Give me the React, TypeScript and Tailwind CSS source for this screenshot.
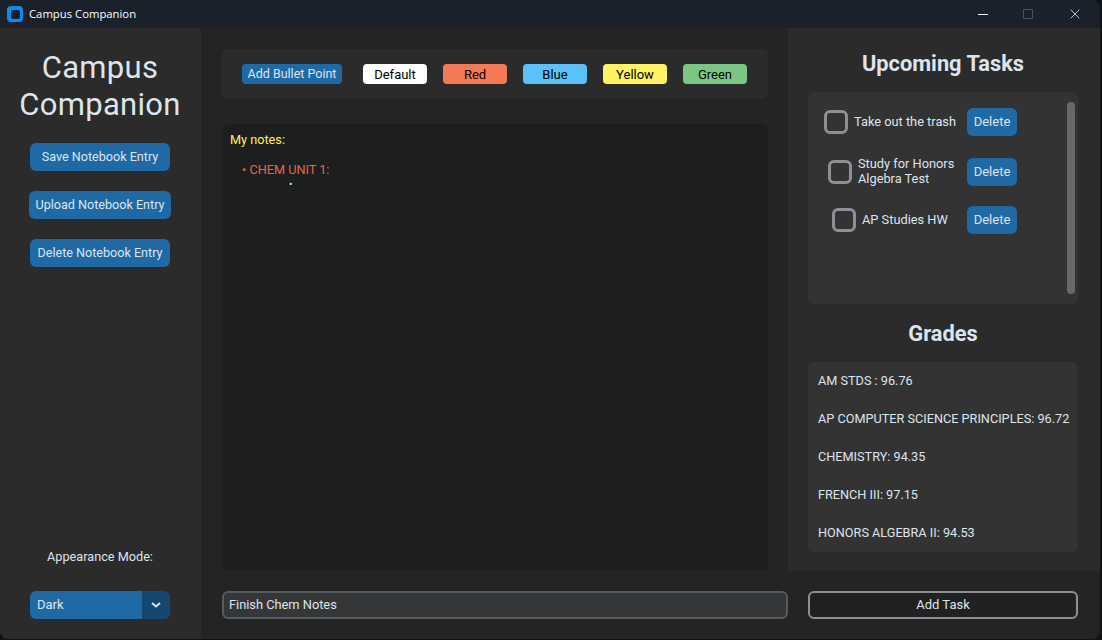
import React from 'react';
import { X } from 'lucide-react';

const colorButtons = [
    { label: 'Default', className: 'bg-white' },
    { label: 'Red', className: 'bg-[#f47a55]' },
    { label: 'Blue', className: 'bg-[#5ac2f8]' },
    { label: 'Yellow', className: 'bg-[#fff263]' },
    { label: 'Green', className: 'bg-[#7cc684]' },
];

const sideButtons = [
    { label: 'Save Notebook Entry', width: 'w-[140px]' },
    { label: 'Upload Notebook Entry', width: 'w-[142px]' },
    { label: 'Delete Notebook Entry', width: 'w-[140px]' },
];

const grades = [
    'AM STDS : 96.76',
    'AP COMPUTER SCIENCE PRINCIPLES: 96.72',
    'CHEMISTRY: 94.35',
    'FRENCH III: 97.15',
    'HONORS ALGEBRA II: 94.53',
];

const TaskRow = ({ lines, left, top }: { lines: string[]; left: string; top: string }) => (
    <div className={`flex items-center ${top} h-[28px]`}>
        <div className={`flex items-center flex-1 gap-[6px] ${left}`}>
            <div className="w-6 h-6 rounded-[6px] border-[3px] border-[#8d9196] shrink-0" />
            <div className="text-[12.8px] leading-[15px] text-[#dce4ee] whitespace-nowrap -mt-[2px]">
                {lines.map(line => <div key={line}>{line}</div>)}
            </div>
        </div>
        <button className="w-[50px] h-[28px] rounded-[6px] bg-[#1f6aa5] text-[13px] text-[#dce4ee] mr-[61px] shrink-0">Delete</button>
    </div>
);

const App: React.FC = () => {
    return (
        <div className="w-[1102px] h-[640px] overflow-hidden bg-[#0f1216] font-['Roboto',sans-serif]">
            <div className="w-[1100px] h-[639px] flex flex-col overflow-hidden rounded-tr-lg rounded-b-lg bg-[#242424]">
                {/* Title bar */}
                <div className="h-[28px] shrink-0 flex items-center bg-[#1a212a] pl-[7px]">
                    <div className="w-4 h-4 rounded-[4px] bg-[#0a8cf0] flex items-center justify-center">
                        <div className="w-[9px] h-[9px] rounded-[2px] bg-[#14202c]" />
                    </div>
                    <span className="ml-[6px] text-[11.3px] text-white font-['Open_Sans',sans-serif]">Campus Companion</span>
                    <div className="ml-auto flex items-center">
                        <div className="w-[10px] h-[1px] bg-white mr-[35px]" />
                        <div className="w-[10px] h-[10px] border border-[#4d535a] rounded-[1px] mr-[34px]" />
                        <X className="w-[16px] h-[16px] text-white mr-[17px]" strokeWidth={1.1} />
                    </div>
                </div>

                <div className="flex flex-1 min-h-0">
                    {/* Sidebar */}
                    <div className="w-[201px] shrink-0 bg-[#2b2b2b] flex flex-col items-center pr-px">
                        <h1 className="mt-[21px] text-[31px] leading-[37px] font-normal text-[#dce4ee] text-center tracking-[0.3px]">Campus<br />Companion</h1>
                        <div className="mt-[20px] flex flex-col items-center gap-[20px]">
                            {sideButtons.map(b => (
                                <button key={b.label} className={`${b.width} h-[28px] rounded-[6px] bg-[#1f6aa5] text-[12.6px] text-[#dce4ee] whitespace-nowrap`}>{b.label}</button>
                            ))}
                        </div>
                        <div className="mt-auto text-[12.7px] text-[#dce4ee] mb-[25px]">Appearance Mode:</div>
                        <div className="w-[140px] h-[28px] mb-[20px] rounded-[6px] overflow-hidden flex text-[13px] text-[#dce4ee]">
                            <div className="flex-1 bg-[#1f6aa5] pl-[7px] flex items-center">Dark</div>
                            <div className="w-[28px] bg-[#144870] flex items-center justify-center">
                                <svg width="10" height="6" viewBox="0 0 10 6" fill="none">
                                    <path d="M1 1 L5 4.5 L9 1" stroke="#dce4ee" strokeWidth="2" />
                                </svg>
                            </div>
                        </div>
                    </div>

                    {/* Main and right */}
                    <div className="flex-1 flex flex-col min-w-0">
                        <div className="h-[543px] flex shrink-0">
                            <div className="w-[587px] shrink-0 pl-[21px] pr-[20px] pt-[21px]">
                                <div className="h-[50px] rounded-[6px] bg-[#2b2b2b] flex items-center pl-[20px] gap-[16px]">
                                    <button className="w-[100px] h-[20px] pt-px rounded-[4px] bg-[#1f6aa5] text-[12.5px] text-[#dce4ee] mr-[5px] whitespace-nowrap">Add Bullet Point</button>
                                    {colorButtons.map(b => (
                                        <button key={b.label} className={`w-[64px] h-[20px] pt-px rounded-[4px] ${b.className} text-[13px] text-black`}>{b.label}</button>
                                    ))}
                                </div>
                                <div className="mt-[25px] h-[446px] rounded-[6px] bg-[#1d1e1e] pt-[8px] pl-[8px] text-[12.7px] leading-[15px]">
                                    <div className="text-[#fff263]">My notes:</div>
                                    <div className="mt-[15px] pl-[12px] text-[#e0694a]">• CHEM UNIT 1:</div>
                                    <div className="pl-[59px] text-[#dce4ee] text-[10px]">•</div>
                                </div>
                            </div>

                            <div className="flex-1 bg-[#2b2b2b] flex flex-col items-center pt-[22px] pr-[2px]">
                                <h2 className="text-[21.8px] leading-[28px] font-bold text-[#dce4ee]">Upcoming Tasks</h2>
                                <div className="relative mt-[14px] w-[270px] h-[212px] rounded-[6px] bg-[#333333] pt-[16px]">
                                    <TaskRow lines={['Take out the trash']} left="pl-[16px]" top="" />
                                    <TaskRow lines={['Study for Honors', 'Algebra Test']} left="pl-[20px]" top="mt-[22px]" />
                                    <TaskRow lines={['AP Studies HW']} left="pl-[24px]" top="mt-[20px]" />
                                    <div className="absolute top-[10px] right-[3px] w-2 h-[192px] rounded-[4px] bg-[#696969]" />
                                </div>
                                <h2 className="mt-[16px] text-[21.8px] leading-[28px] font-bold text-[#dce4ee]">Grades</h2>
                                <div className="mt-[14px] w-[270px] h-[190px] rounded-[6px] bg-[#333333] pl-[10px] pt-[11px] text-[12.7px] leading-[15px] text-[#dce4ee] flex flex-col gap-[23px] whitespace-nowrap">
                                    {grades.map(g => <div key={g}>{g}</div>)}
                                </div>
                            </div>
                        </div>

                        <div className="flex-1 flex pl-[21px] pt-[20px] gap-[20px]">
                            <div className="w-[566px] h-[28px] rounded-[6px] border-2 border-[#565b5e] bg-[#343638] pl-[5px] flex items-center text-[12.8px] text-[#dce4ee]">Finish Chem Notes</div>
                            <button className="w-[270px] h-[28px] rounded-[6px] border-2 border-[#8d9196] bg-[#212121] text-[13px] text-[#dce4ee]">Add Task</button>
                        </div>
                    </div>
                </div>
            </div>
        </div>
    );
};

export default App;
